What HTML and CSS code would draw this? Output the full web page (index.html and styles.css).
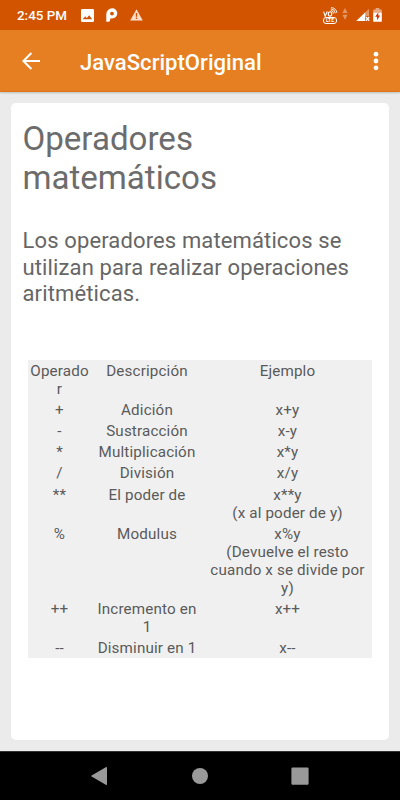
FILE: index.html
```html
<!DOCTYPE html>
<html lang="es">
<head>
    <meta charset="UTF-8">
    <meta name="viewport" content="width=device-width, initial-scale=1.0">
    <title>JavaScriptOriginal</title>
    <link rel="stylesheet" href="styles.css">
</head>
<body>
    <div class="status-bar">
        <span class="time">2:45 PM</span>
        <svg class="icon-photo" width="13" height="13" viewBox="0 0 13 13">
            <path fill="#fff" fill-rule="evenodd" d="M1.3 0h10.4Q13 0 13 1.3v10.4q0 1.3-1.3 1.3H1.3Q0 13 0 11.7V1.3Q0 0 1.3 0zM1.8 10.3h9.4L8.2 6.2 5.8 9 4.2 7.2z"/>
        </svg>
        <svg class="icon-p" width="12" height="14" viewBox="0 0 12 14">
            <path fill="#fff" fill-rule="evenodd" d="M.3 13.8V6.2A6 6 0 0 1 6.2.2a5.1 5.1 0 0 1 0 10.2H4.2v1.6q0 1.8-1.8 1.8zM6 3.7a1.9 1.9 0 1 0 0 3.8 1.9 1.9 0 0 0 0-3.8z"/>
        </svg>
        <svg class="icon-warning" width="13" height="12" viewBox="0 0 13 12">
            <path fill="#fbdfcb" d="M6.5.3 12.8 11.5H.2z"/>
            <path fill="#d35400" d="M5.8 4h1.4v3.8H5.8zM5.8 8.6h1.4V10H5.8z"/>
        </svg>
        <div class="volte">
            <svg class="volte-waves" width="16" height="10" viewBox="0 0 16 10" fill="none" stroke="#fff">
                <path stroke-width="1.1" d="m1.6 4.6 1.6 4.6 2.1-4.6"/>
                <ellipse cx="8" cy="6.9" rx="1.7" ry="2.2" stroke-width="1.1"/>
                <path stroke-width=".9" d="M8.7 3.3q2.6.2 2.8 3.2M8.8 1.9q4.1.2 4.5 4.4M9 .6q5.3.3 5.9 5.3"/>
            </svg>
            <span class="lte">LTE</span>
        </div>
        <svg class="icon-data" width="6" height="12" viewBox="0 0 6 12" fill="#e29866">
            <path d="M3 0 5.6 5H.4zM3 11.8.4 6.8h5.2z"/>
        </svg>
        <svg class="icon-signal" width="14" height="14" viewBox="0 0 14 14">
            <path fill="#e29866" d="M13 .8V8H9.3V4.5z"/>
            <path fill="#fff" d="M.2 13 9.3 4.2V13z"/>
            <path stroke="#d35400" stroke-width="2" d="m10 9 3.2 3.7M13.2 9 10 12.7"/>
            <path stroke="#fff" stroke-width="1.3" d="m10 9 3.2 3.7M13.2 9 10 12.7"/>
        </svg>
        <svg class="icon-battery" width="9" height="14" viewBox="0 0 9 14">
            <path fill="#e8a983" d="M2.7 0h3.6v1.4H8q.8 0 .8.8v3H.2v-3q0-.8.8-.8h1.7z"/>
            <path fill="#fff" d="M.2 4.8h8.6v8.1q0 .9-.9.9H1.1q-.9 0-.9-.9z"/>
            <path fill="#d32f00" d="M5.3 4.2 2.2 8.8h1.9v3.5l3-4.7H5.3z"/>
        </svg>
    </div>

    <div class="app-bar">
        <svg class="back" width="18" height="18" viewBox="0 0 18 18" fill="none" stroke="#fff" stroke-width="2">
            <path d="M18 9H1.7M9.4 1 1.4 9l8 8"/>
        </svg>
        <span class="title">JavaScriptOriginal</span>
        <svg class="menu" width="6" height="20" viewBox="0 0 6 20" fill="#fff">
            <circle cx="3" cy="3.2" r="2.4"/>
            <circle cx="3" cy="10" r="2.4"/>
            <circle cx="3" cy="16.8" r="2.4"/>
        </svg>
    </div>

    <div class="content">
        <div class="card">
            <h1>Operadores matemáticos</h1>
            <p>Los operadores matemáticos se utilizan para realizar operaciones aritméticas.</p>
            <table>
                <colgroup>
                    <col class="col-op">
                    <col class="col-desc">
                    <col class="col-ex">
                </colgroup>
                <tr><td>Operador</td><td>Descripción</td><td>Ejemplo</td></tr>
                <tr><td>+</td><td>Adición</td><td>x+y</td></tr>
                <tr><td>-</td><td>Sustracción</td><td>x-y</td></tr>
                <tr><td>*</td><td>Multiplicación</td><td>x*y</td></tr>
                <tr><td>/</td><td>División</td><td>x/y</td></tr>
                <tr><td>**</td><td>El poder de</td><td>x**y<br>(x al poder de y)</td></tr>
                <tr><td>%</td><td>Modulus</td><td>x%y<br>(Devuelve el resto cuando x se divide por y)</td></tr>
                <tr><td>++</td><td>Incremento en 1</td><td>x++</td></tr>
                <tr><td>--</td><td>Disminuir en 1</td><td>x--</td></tr>
            </table>
        </div>
    </div>

    <div class="nav-bar">
        <svg width="18" height="20" viewBox="0 0 18 20" fill="#999">
            <path d="M14.8 1.2q1.2-.6 1.2.5v16.6q0 1.1-1.2.5L.6 10.6q-.8-.6 0-1.2z"/>
        </svg>
        <svg width="18" height="20" viewBox="0 0 18 20" fill="#999">
            <circle cx="9" cy="10" r="8"/>
        </svg>
        <svg width="18" height="20" viewBox="0 0 18 20" fill="#999">
            <rect x=".4" y="1.5" width="17.2" height="17.2" rx="1.2"/>
        </svg>
    </div>
</body>
</html>
```
FILE: styles.css
```css
* {
    box-sizing: border-box;
}
body {
    margin: 0;
    height: 800px;
    display: flex;
    flex-direction: column;
    font-family: Roboto, "Liberation Sans", sans-serif;
    background-color: #ebebeb;
    overflow: hidden;
}
.status-bar {
    height: 30px;
    flex: none;
    display: flex;
    align-items: center;
    padding: 0 18px 0 17px;
    background-color: #d35400;
    color: #fff;
}
.time {
    width: 64px;
    font-size: 13.4px;
    font-weight: 500;
    line-height: 30px;
    padding-top: 1px;
    white-space: nowrap;
}
.icon-p {
    margin-left: 12px;
}
.icon-warning {
    margin-left: 12px;
}
.volte {
    width: 16px;
    margin-left: auto;
    display: flex;
    flex-direction: column;
    align-items: center;
}
.volte-waves {
    display: block;
}
.lte {
    width: 14px;
    height: 7px;
    border: 1px solid #fff;
    border-radius: 3px;
    font-size: 5px;
    font-weight: 700;
    line-height: 5px;
    text-align: center;
}
.icon-data {
    margin: 0 8px 3px 4px;
}
.icon-battery {
    margin-left: 3px;
}
.app-bar {
    height: 62px;
    flex: none;
    display: flex;
    align-items: center;
    padding: 0 21px 0 22px;
    background-color: #e67e22;
    border-bottom: 1px solid #dd761c;
    box-shadow: 0 1px 2px rgba(0, 0, 0, 0.2);
    color: #fff;
}
.title {
    flex: 1;
    margin-left: 40px;
    padding-top: 2px;
    font-size: 22.1px;
    font-weight: 500;
    line-height: 26px;
}
.content {
    flex: 1;
    padding: 11px;
}
.card {
    height: 637px;
    padding: 16px 12px 16px 11.5px;
    background-color: #fff;
    border-radius: 5px;
}
h1 {
    margin: 0;
    font-size: 33.1px;
    font-weight: 400;
    line-height: 39px;
    color: #6c6c6c;
}
p {
    margin: 31px 0 0;
    font-size: 22px;
    letter-spacing: 0.13px;
    line-height: 26.5px;
    color: #666;
}
table {
    width: 344px;
    margin: 52.5px 0 0 5.5px;
    table-layout: fixed;
    border-collapse: collapse;
    background-color: #f0f0f0;
    color: #5a5a5a;
    font-size: 15.2px;
    letter-spacing: 0.15px;
    line-height: 18.1px;
    text-align: center;
}
td {
    padding: 2px 1px 1px;
    vertical-align: top;
    overflow-wrap: break-word;
}
.col-op {
    width: 63px;
}
.col-desc {
    width: 112px;
}
.nav-bar {
    height: 49px;
    flex: none;
    display: flex;
    justify-content: center;
    align-items: center;
    gap: 82px;
    border-top: 1px solid #333;
    background-color: #000;
}
```
